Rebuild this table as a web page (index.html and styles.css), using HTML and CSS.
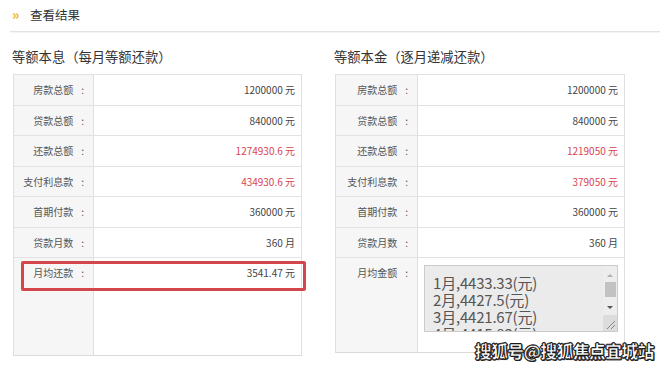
FILE: index.html
```html
<!DOCTYPE html>
<html lang="zh">
<head>
<meta charset="utf-8">
<link rel="stylesheet" href="styles.css">
</head>
<body>
<div class="page">
  <div class="header"><span class="arrows">»</span><span class="htitle">查看结果</span></div>
  <div class="cols">
    <div class="col col-left">
      <h3 class="ctitle">等额本息（每月等额还款）</h3>
      <div class="table">
        <div class="row"><div class="lab">房款总额<span class="colon">:</span></div><div class="val">1200000 元</div></div>
        <div class="row"><div class="lab">贷款总额<span class="colon">:</span></div><div class="val">840000 元</div></div>
        <div class="row"><div class="lab">还款总额<span class="colon">:</span></div><div class="val red">1274930.6 元</div></div>
        <div class="row"><div class="lab">支付利息款<span class="colon">:</span></div><div class="val red">434930.6 元</div></div>
        <div class="row"><div class="lab">首期付款<span class="colon">:</span></div><div class="val">360000 元</div></div>
        <div class="row"><div class="lab">贷款月数<span class="colon">:</span></div><div class="val">360 月</div></div>
        <div class="row row-last"><div class="lab">月均还款<span class="colon">:</span></div><div class="val">3541.47 元</div></div>
      </div>
    </div>
    <div class="col col-right">
      <h3 class="ctitle">等额本金（逐月递减还款）</h3>
      <div class="table">
        <div class="row"><div class="lab">房款总额<span class="colon">:</span></div><div class="val">1200000 元</div></div>
        <div class="row"><div class="lab">贷款总额<span class="colon">:</span></div><div class="val">840000 元</div></div>
        <div class="row"><div class="lab">还款总额<span class="colon">:</span></div><div class="val red">1219050 元</div></div>
        <div class="row"><div class="lab">支付利息款<span class="colon">:</span></div><div class="val red">379050 元</div></div>
        <div class="row"><div class="lab">首期付款<span class="colon">:</span></div><div class="val">360000 元</div></div>
        <div class="row"><div class="lab">贷款月数<span class="colon">:</span></div><div class="val">360 月</div></div>
        <div class="row row-last">
          <div class="lab">月均金额<span class="colon">:</span></div>
          <div class="val val-box">
            <div class="tarea">
              <div class="tlines">
                <div>1月,4433.33(元)</div>
                <div>2月,4427.5(元)</div>
                <div>3月,4421.67(元)</div>
                <div>4月,4415.83(元)</div>
              </div>
              <div class="sbar">
                <div class="sb-up"></div>
                <div class="sb-thumb"></div>
                <div class="sb-down"></div>
                <div class="sb-grip">
                  <svg width="14" height="16" viewBox="0 0 14 16"><path d="M4 14 L12 6 M8 14 L12 10" stroke="#888" stroke-width="1" fill="none"/></svg>
                </div>
              </div>
            </div>
          </div>
        </div>
      </div>
    </div>
  </div>
  <div class="redbox"></div>
  <div class="mark">搜狐号@搜狐焦点宜城站</div>
</div>
</body>
</html>
```
FILE: styles.css
```css
html, body {
  margin: 0;
  padding: 0;
  background: #fff;
}
body {
  font-family: "Noto Sans CJK SC", "Noto Sans", sans-serif;
  color: #444;
}
.page {
  position: relative;
  width: 660px;
  height: 366px;
  overflow: hidden;
}
.header {
  margin-left: 10px;
  height: 32px;
  border-bottom: 1px solid #e2e2e2;
  box-shadow: 0 1px 1px rgba(0,0,0,0.04);
  display: flex;
  align-items: center;
  padding-left: 2px;
  box-sizing: border-box;
  padding-bottom: 3px;
}
.arrows {
  color: #f0b21e;
  font-size: 14px;
  font-weight: bold;
  width: 18px;
  line-height: 1;
}
.htitle {
  font-size: 12.5px;
  color: #333;
}
.cols {
  display: flex;
  gap: 33px;
  padding-left: 13px;
}
.col {
  width: 289px;
}
.col-right {
  width: 290px;
}
.ctitle {
  margin: 15px 0 7px -1px;
  font-size: 13.3px;
  font-weight: normal;
  color: #333;
  line-height: 20px;
  height: 20px;
}
.table {
  border: 1px solid #e0e0e0;
  border-bottom-color: #dadada;
}
.row {
  display: flex;
  height: 30.5px;
  box-sizing: border-box;
  border-bottom: 1px solid #e2e2e2;
  font-size: 10px;
}
.row-last {
  height: 97px;
  border-bottom: none;
}
.col-right .row-last {
  height: 94px;
}
.lab {
  width: 80px;
  flex: none;
  box-sizing: border-box;
  background: #f6f6f6;
  border-right: 1px solid #e0e0e0;
  text-align: right;
  padding-right: 9px;
  color: #555;
  line-height: 29px;
}
.colon {
  margin-left: 8px;
}
.col-right .lab {
  width: 82px;
}
.val {
  flex: 1;
  text-align: right;
  padding-right: 6px;
  line-height: 29px;
  color: #444;
}
.val.red {
  color: #d84352;
}
.val-box {
  padding: 7px 6px 0 6px;
}
.tarea {
  height: 67px;
  box-sizing: border-box;
  border: 1px solid #cbcbcb;
  background: #ebebeb;
  display: flex;
  overflow: hidden;
}
.tlines {
  flex: 1;
  text-align: left;
  padding: 8px 0 0 8px;
  font-size: 15px;
  line-height: 17px;
  color: #555;
  letter-spacing: -0.2px;
}
.sbar {
  width: 14px;
  flex: none;
  display: flex;
  flex-direction: column;
  align-items: center;
  background: #ededed;
}
.sb-up {
  margin-top: 8px;
  width: 0;
  height: 0;
  border-left: 3px solid transparent;
  border-right: 3px solid transparent;
  border-bottom: 3px solid #b0b0b0;
}
.sb-thumb {
  margin-top: 5px;
  width: 11px;
  height: 15px;
  background: #c2c2c2;
}
.sb-down {
  margin-top: 9px;
  width: 0;
  height: 0;
  border-left: 3.5px solid transparent;
  border-right: 3.5px solid transparent;
  border-top: 3.5px solid #555;
}
.sb-grip {
  margin-top: auto;
  width: 14px;
  height: 16px;
  background: #dcdcdc;
}
.sb-grip svg {
  display: block;
}
.redbox {
  position: absolute;
  left: 21px;
  top: 261px;
  width: 285px;
  height: 30px;
  box-sizing: border-box;
  border: 3px solid #d2474b;
  border-radius: 2px;
}
.mark {
  position: absolute;
  left: 475px;
  top: 339px;
  font-size: 16.5px;
  font-weight: 900;
  color: #fff;
  letter-spacing: -0.3px;
  -webkit-text-stroke: 0.6px #111;
  text-shadow: 1px 1px 0 #222, -1px 0 0 #222, 0 -1px 0 #222, 1px 0 0 #222, 0 1px 0 #222;
  white-space: nowrap;
}
```
